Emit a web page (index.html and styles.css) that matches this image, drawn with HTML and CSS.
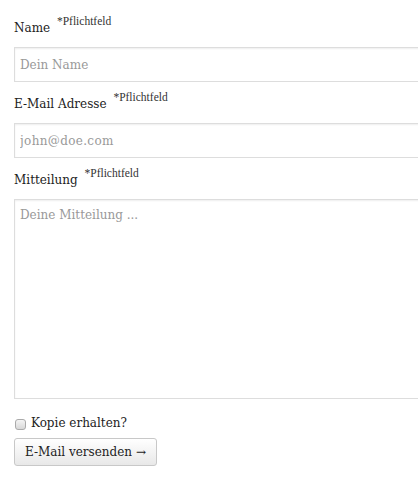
FILE: index.html
```html
<!DOCTYPE html>
<html lang="de">
<head>
<meta charset="utf-8">
<title>Kontakt</title>
<link rel="stylesheet" href="styles.css">
</head>
<body>
<div class="page">
  <form class="contact">
    <div class="field">
      <label class="label" for="name">Name <span class="req">*Pflichtfeld</span></label>
      <input class="input" id="name" type="text" placeholder="Dein Name">
    </div>
    <div class="field">
      <label class="label" for="mail">E-Mail Adresse <span class="req">*Pflichtfeld</span></label>
      <input class="input wide" id="mail" type="text" placeholder="john@doe.com">
    </div>
    <div class="field">
      <label class="label" for="msg">Mitteilung <span class="req">*Pflichtfeld</span></label>
      <textarea class="input area" id="msg" placeholder="Deine Mitteilung ..."></textarea>
    </div>
    <label class="copy"><input class="check" type="checkbox"> Kopie erhalten?</label>
    <button class="send" type="button">E-Mail versenden &rarr;</button>
  </form>
</div>
</body>
</html>
```
FILE: styles.css
```css
html, body {
  margin: 0;
  padding: 0;
  background: #fff;
}
.page {
  overflow: hidden;
  padding: 19px 0 0 14px;
  font-family: "DejaVu Serif", "Liberation Serif", serif;
  color: #2a2a2a;
}
.contact {
  display: flex;
  flex-direction: column;
  width: 420px;
}
.field {
  display: flex;
  flex-direction: column;
}
.label {
  font-size: 12px;
  line-height: 18px;
  height: 18px;
  margin-bottom: 10px;
  color: #222;
}
.req {
  font-family: "Liberation Serif", serif;
  font-size: 11.5px;
  line-height: 0;
  vertical-align: 7px;
  margin-left: 3px;
  color: #333;
}
.input {
  box-sizing: border-box;
  width: 100%;
  height: 35px;
  margin: 0 0 13px 0;
  padding: 0 5px;
  border: 1px solid #ddd;
  box-shadow: inset 0 1px 2px rgba(0,0,0,0.07);
  font-family: "DejaVu Serif", "Liberation Serif", serif;
  font-size: 12px;
  color: #333;
  background: #fff;
  outline: none;
}
.wide {
  letter-spacing: 0.35px;
}
.input::placeholder {
  color: #999;
}
.area {
  height: 200px;
  padding-top: 8px;
  resize: none;
  margin-bottom: 15px;
}
.copy {
  display: flex;
  align-items: center;
  gap: 5px;
  font-size: 12px;
  line-height: 18px;
  height: 18px;
  margin-bottom: 6px;
  color: #222;
}
.check {
  appearance: none;
  -webkit-appearance: none;
  box-sizing: border-box;
  margin: 2px 0 0 1px;
  width: 11px;
  height: 11px;
  border: 1px solid #aaa;
  border-radius: 3px;
  background: linear-gradient(#f4f4f4, #d8d8d8);
}
.send {
  align-self: flex-start;
  height: 28px;
  padding: 0 10px;
  border: 1px solid #c8c8c8;
  border-radius: 3px;
  background: linear-gradient(#fff, #e8e8e8);
  font-family: "DejaVu Serif", "Liberation Serif", serif;
  font-size: 12px;
  color: #222;
}
```
